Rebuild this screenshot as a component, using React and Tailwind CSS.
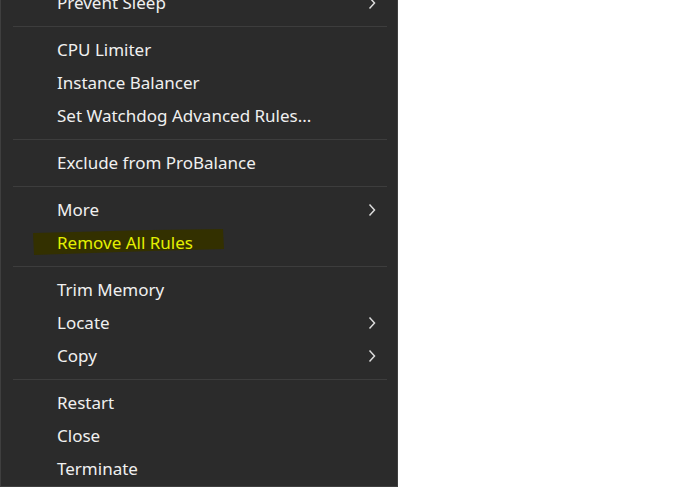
const GROUPS = [
  [{ label: 'Prevent Sleep', sub: true }],
  [{ label: 'CPU Limiter' }, { label: 'Instance Balancer' }, { label: 'Set Watchdog Advanced Rules...' }],
  [{ label: 'Exclude from ProBalance' }],
  [{ label: 'More', sub: true }, { label: 'Remove All Rules', marked: true }],
  [{ label: 'Trim Memory' }, { label: 'Locate', sub: true }, { label: 'Copy', sub: true }],
  [{ label: 'Restart' }, { label: 'Close' }, { label: 'Terminate' }],
]

function Item({ label, sub, marked }) {
  return (
    <div className="relative flex items-center h-[33px] pl-[56px] pr-[20px]">
      {marked && (
        <svg className="absolute left-[30px] top-[2px]" width="194" height="28" viewBox="0 0 194 28">
          <path d="M2 5 L120 2 L192 1 L193 21 L120 23 L60 25 L3 27 Z" fill="#333000" />
        </svg>
      )}
      <span className={'relative flex-1 ' + (marked ? 'text-[#e4f000]' : 'text-[#f0f0f0]')}>{label}</span>
      {sub && (
        <svg width="10" height="14" viewBox="0 0 10 14" className="text-[#dcdcdc]">
          <path d="M2.5 1.5 L7.5 7 L2.5 12.5" fill="none" stroke="currentColor" strokeWidth="1.5" />
        </svg>
      )}
    </div>
  )
}

export default function App() {
  return (
    <div className="w-[692px] h-[488px] bg-white overflow-hidden">
      <div
        className="w-[398px] bg-[#2b2b2b] border border-[#3f3f3f] border-t-0 -mt-[14px] pb-px text-[17px] flex flex-col"
        style={{ fontFamily: '"Noto Sans", "Open Sans", sans-serif' }}
      >
        {GROUPS.map((items, gi) => (
          <div key={gi}>
            {gi > 0 && <div className="ml-[12px] mr-[10px] mt-[7px] mb-[6px] h-px bg-[#3d3d3d]" />}
            {items.map((it) => (
              <Item key={it.label} {...it} />
            ))}
          </div>
        ))}
      </div>
    </div>
  )
}
